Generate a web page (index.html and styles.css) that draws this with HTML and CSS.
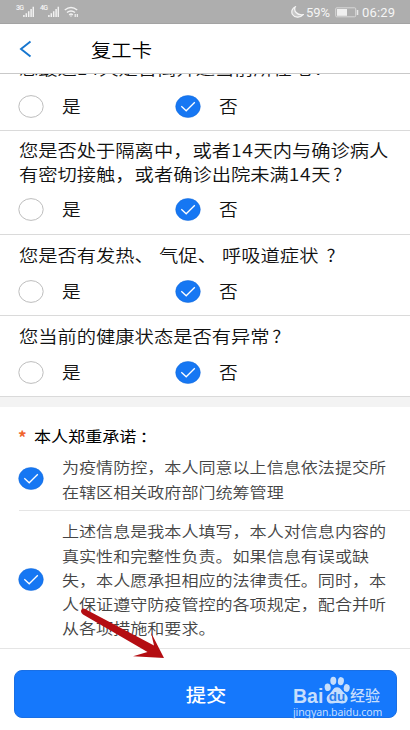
FILE: index.html
```html
<!DOCTYPE html>
<html lang="zh-CN">
<head>
<meta charset="utf-8">
<title>复工卡</title>
<link rel="stylesheet" href="styles.css">
</head>
<body>
<svg class="defs" width="0" height="0">
  <symbol id="bars" viewBox="0 0 11 12"><path d="M.9 11V9M3.3 11V7.2M5.7 11V5.3M8.1 11V3M10.3 11V.8" stroke="#f2f2f2" stroke-width="1.5"/></symbol>
  <symbol id="off" viewBox="0 0 26 23"><ellipse cx="13" cy="11.5" rx="12.2" ry="10.9" fill="#fff" stroke="#bdbdbd"/></symbol>
  <symbol id="on" viewBox="0 0 26 23"><ellipse cx="13" cy="11.5" rx="12.3" ry="11" fill="#1677f3" stroke="#1268d8" stroke-width=".5"/><path d="M6.3 11.3l4.9 4.5 8.6-8.6" fill="none" stroke="#fff" stroke-width="1.3"/></symbol>
</svg>
<div class="phone">
  <div class="status">
    <span class="net">3G</span><svg class="sig" width="11" height="12"><use href="#bars"/></svg>
    <span class="net net2">4G</span><svg class="sig" width="11" height="12"><use href="#bars"/></svg>
    <svg class="wifi" width="15" height="12" viewBox="0 0 15 12" fill="none" stroke="#f2f2f2" stroke-width="1.5"><path d="M.8 4Q7-1 13.2 4M3 6.5Q7 3.3 11 6.5M5.2 8.8Q7 7.4 8.8 8.8"/><path d="M6.2 10h1.6M11.2 8v3M13.3 8v3" stroke-width="1.2"/></svg>
    <svg class="moon" width="13" height="12" viewBox="0 0 13 12"><path d="M4.3.8C2.4 4.6 5.7 9.6 12.2 8.7 9 12.4 3.4 11.6 1.5 8.5-.1 5.7 1.3 2 4.3.8z" fill="#f5f5f5" fill-opacity=".35" stroke="#f5f5f5" stroke-width="1.2"/></svg>
    <span class="pct">59%</span>
    <svg class="batt" width="24" height="11" viewBox="0 0 24 11"><rect x=".7" y=".8" width="20" height="9" rx="1" fill="none" stroke="#d8d8d8"/><rect x="2" y="2" width="10" height="6.8" fill="#efefef"/><path d="M22.5 3v5" stroke="#e8e8e8" stroke-width="1.5"/></svg>
    <span class="time">06:29</span>
  </div>
  <header class="header">
    <svg width="13" height="18" viewBox="0 0 13 18"><path d="M11.5 1.5L2 9l9.5 7.5" fill="none" stroke="#1676cf" stroke-width="1.9"/></svg>
    <h1>复工卡</h1>
  </header>
  <section class="item first">
    <p class="q">您最近<span class="num">14</span>天是否离开过当前所在地<span class="mk">?</span></p>
    <div class="opts"><svg class="radio"><use href="#off"/></svg><span class="lab"><i>是</i></span><svg class="radio"><use href="#on"/></svg><span class="lab no"><i>否</i></span></div>
  </section>
  <section class="item tall">
    <p class="q">您是否处于隔离中，或者<span class="num">14</span>天内与确诊病人<br>有密切接触，或者确诊出院未满<span class="num">14</span>天<span class="mk">?</span></p>
    <div class="opts"><svg class="radio"><use href="#off"/></svg><span class="lab"><i>是</i></span><svg class="radio"><use href="#on"/></svg><span class="lab no"><i>否</i></span></div>
  </section>
  <section class="item">
    <p class="q wide">您是否有发热、 气促、 呼吸道症状 <span class="mk">?</span></p>
    <div class="opts"><svg class="radio"><use href="#off"/></svg><span class="lab"><i>是</i></span><svg class="radio"><use href="#on"/></svg><span class="lab no"><i>否</i></span></div>
  </section>
  <section class="item">
    <p class="q">您当前的健康状态是否有异常<span class="mk">?</span></p>
    <div class="opts"><svg class="radio"><use href="#off"/></svg><span class="lab"><i>是</i></span><svg class="radio"><use href="#on"/></svg><span class="lab no"><i>否</i></span></div>
  </section>
  <div class="gap"></div>
  <h2 class="promise"><span class="star">*</span><span class="ptext">本人郑重承诺<span class="colon">：</span></span></h2>
  <section class="agree a1">
    <svg class="radio"><use href="#on"/></svg>
    <p>为疫情防控，本人同意以上信息依法提交所<br>在辖区相关政府部门统筹管理</p>
  </section>
  <section class="agree a2">
    <svg class="radio"><use href="#on"/></svg>
    <p>上述信息是我本人填写，本人对信息内容的<br>真实性和完整性负责。如果信息有误或缺<br>失，本人愿承担相应的法律责任。同时，本<br>人保证遵守防疫管控的各项规定，配合并听<br>从各项措施和要求。</p>
  </section>
  <footer class="foot"><button class="submit"><span>提交</span></button></footer>
  <svg class="arrow" width="88" height="56" viewBox="0 0 88 56"><path d="M5 2L74 38.5 71 25.5 84 51 53 49.3 67.5 45 3 7.5Q0 5 1.5 2.8 3 .8 5 2z" fill="#b40d12"/></svg>
  <div class="mark">
    <div class="brand">
      <span class="bai">Bai</span>
      <span class="paw"><svg width="26" height="29" viewBox="0 0 26 29" fill="#c6defc"><ellipse cx="3.7" cy="11.3" rx="3" ry="3.8" transform="rotate(-12 3.7 11.3)"/><ellipse cx="9.3" cy="4.8" rx="3" ry="4.1"/><ellipse cx="16.9" cy="5.2" rx="3" ry="4.1" transform="rotate(8 16.9 5.2)"/><ellipse cx="22.7" cy="12" rx="3" ry="3.9" transform="rotate(10 22.7 12)"/><path d="M13 11.3c3.7 0 4.5 3.2 7 5.5 2.5 2 4.4 4.1 3.5 7-1.1 4-4.5 4-7.2 3.5-2.2-.4-4.2-.4-6.4 0-3 .6-6.5.2-7.1-3.6-.5-3.2 1.4-4.8 3.6-6.7 2.4-2.1 2.9-5.7 6.6-5.7z"/></svg><b>du</b></span>
      <span class="jy">经验</span>
    </div>
    <div class="url">jingyan.baidu.com</div>
  </div>
</div>
</body>
</html>
```
FILE: styles.css
```css
* { box-sizing: border-box; margin: 0; padding: 0; }
body { background: #fff; font-family: "Noto Sans CJK SC", sans-serif; color: #111; }
.defs { position: absolute; }
.phone { position: relative; width: 410px; height: 730px; overflow: hidden; display: flex; flex-direction: column; background: #fff; }
.phone > * { flex-shrink: 0; }
svg { display: block; }

.status { height: 24px; background: #aeaeae; border-bottom: 1px solid #a3a3a3; display: flex; align-items: center; padding: 1px 13px 0 16px; color: #f5f5f5; font-family: Roboto, sans-serif; white-space: nowrap; }
.net { font-size: 7px; line-height: 7px; width: 7px; margin-bottom: 7px; font-weight: 500; letter-spacing: -.8px; }
.net2 { margin-left: 6px; margin-right: 1px; }
.sig { flex: none; }
.wifi { margin-left: 5px; }
.moon { margin-left: auto; }
.pct { font-size: 13px; margin-left: 2px; width: 26px; }
.batt { margin-left: 3px; }
.time { font-size: 13px; margin-left: 3px; width: 35px; letter-spacing: .15px; }

.header { height: 50px; border-bottom: 1px solid #c9c9c9; display: flex; align-items: center; padding-left: 19px; }
.header h1 { font-size: 18px; font-weight: 350; line-height: 24px; margin-left: 59px; transform: scaleX(1.13); transform-origin: left; color: #000; }

.item { height: 81px; border-bottom: 1px solid #dadada; padding: 8px 0 0 19px; overflow: hidden; }
.item.tall { height: 104px; padding-top: 7px; }
.item.first { height: 57px; padding-top: 0; }
.first .q { margin-top: -18px; }
.q { width: max-content; font-size: 17.3px; font-weight: 350; line-height: 23.5px; white-space: nowrap; transform: scaleX(1.115); transform-origin: left; }
.num { letter-spacing: .6px; }
.mk { margin-left: 2.5px; }
.wide { word-spacing: .8px; }
.opts { display: flex; align-items: center; height: 23px; margin-top: 13.2px; }
.first .opts { margin-top: 15px; }
.radio { width: 26px; height: 23px; margin-left: -1px; flex: none; }
.lab { width: 114px; margin-left: 18px; font-size: 17px; font-weight: 350; line-height: 23px; padding-bottom: 2px; }
.lab i { display: inline-block; font-style: normal; transform: scaleX(1.1); transform-origin: left; }
.lab.no { width: 20px; }

.gap { height: 10px; background: #f3f3f3; }
.promise { display: flex; align-items: center; height: 48px; padding: 7px 0 0 18px; font-size: 15.3px; font-weight: 400; line-height: 24px; color: #000; }
.star { width: 16px; color: #f0642d; font-size: 17px; height: 20px; font-weight: 700; }
.ptext { transform: scaleX(1.115); transform-origin: left; }
.colon { margin-left: 3px; }
.agree { display: flex; align-items: center; padding-left: 19px; }
.agree p { margin-left: 18px; font-size: 15.3px; font-weight: 350; line-height: 24.25px; white-space: nowrap; color: #444; transform: scaleX(1.115); transform-origin: left; }
.a1 { height: 56px; margin-left: 19px; padding: 0 0 8px; border-bottom: 1px solid #e5e5e5; }
.a2 { height: 138px; padding-bottom: 1px; border-bottom: 1px solid #e5e5e5; }

.foot { padding: 21px 13px 0 14px; }
.submit { display: block; width: 100%; height: 48px; border: 1px solid #1a6fe4; border-radius: 8px; background: #1578fc; color: #fff; font: 500 18px/46px "Noto Sans CJK SC", sans-serif; }
.submit span { display: inline-block; transform: scaleX(1.13); }
.arrow { position: absolute; left: 80px; top: 607px; }

.mark { position: absolute; left: 293px; top: 676px; color: #c6defc; }
.brand { display: flex; height: 29px; align-items: flex-end; }
.bai { width: 30px; font: 700 19.5px/20px "Liberation Sans", sans-serif; margin-bottom: -1px; }
.paw { position: relative; width: 26px; margin-left: 1px; }
.paw b { position: absolute; left: 0; right: 0; bottom: 2px; text-align: center; font: 700 13.5px/13px "Liberation Sans", sans-serif; color: #2a80f0; }
.jy { font-size: 15px; line-height: 20px; font-weight: 500; white-space: nowrap; }
.url { font: 10.5px/12px "Noto Sans", sans-serif; margin-top: 1px; white-space: nowrap; letter-spacing: -.1px; }
```
